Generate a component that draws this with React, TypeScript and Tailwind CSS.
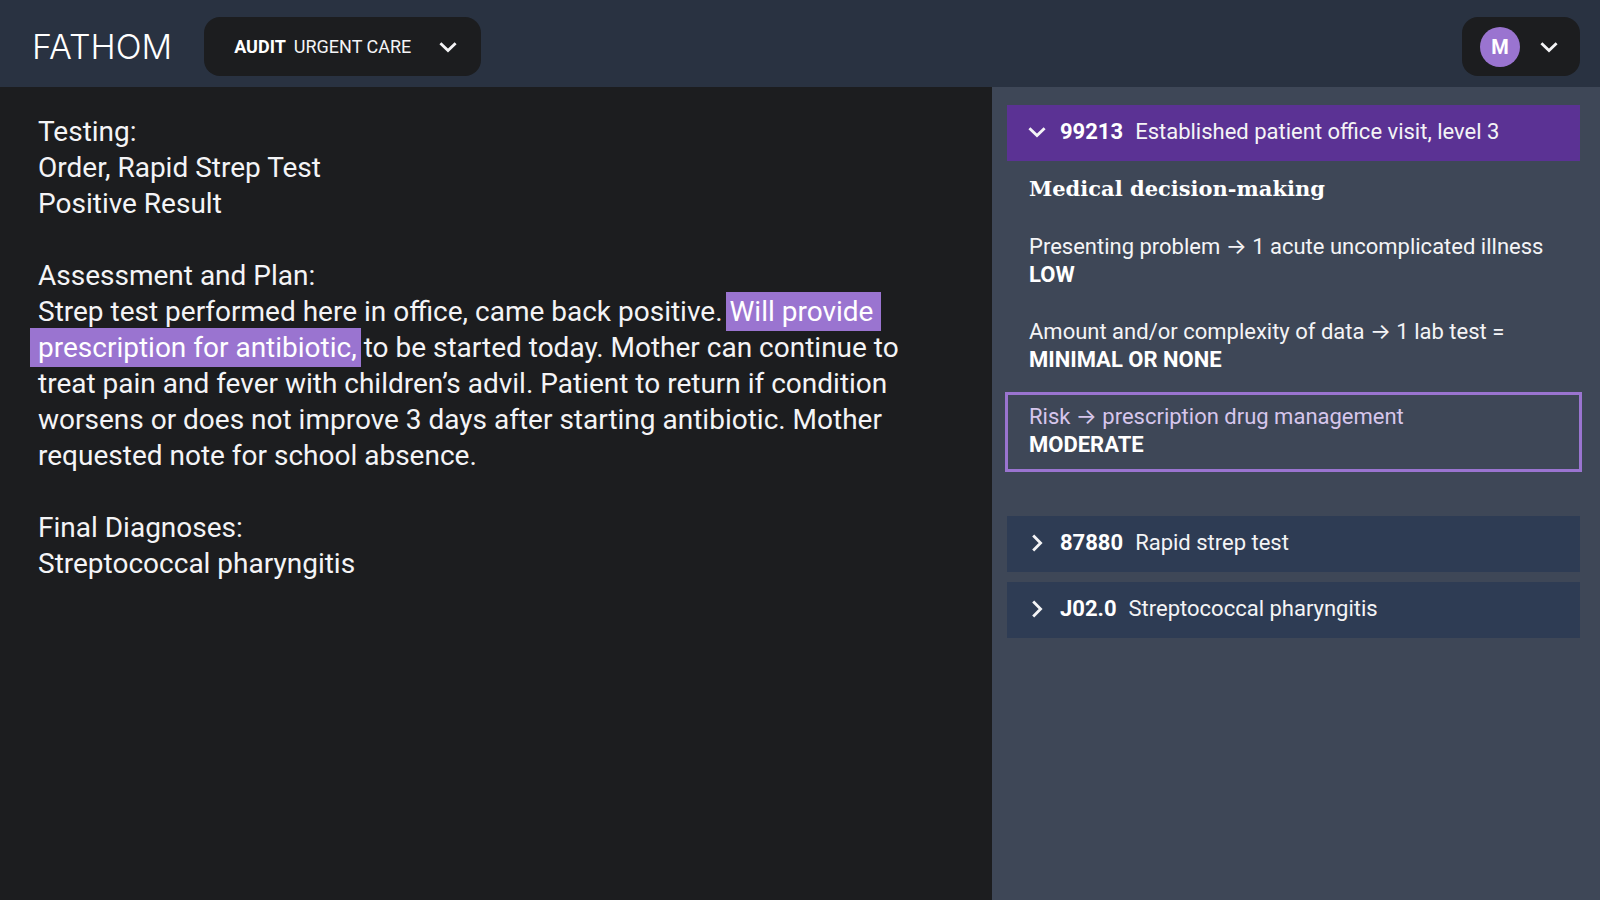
import { useState } from 'react';
import clsx from 'clsx';

type ChevronProps = { direction?: 'down' | 'right' };

function Chevron({ direction = 'down' }: ChevronProps) {
  return (
    <svg
      viewBox="0 0 18 18"
      className={clsx('size-[18px] shrink-0', direction === 'right' && '-rotate-90')}
      fill="none"
      stroke="currentColor"
      strokeWidth="2.8"
      aria-hidden="true"
    >
      <path d="M1.4 5.2 9 12.6l7.6-7.4" />
    </svg>
  );
}

const factors = [
  { label: 'Presenting problem → 1 acute uncomplicated illness', level: 'LOW', active: false },
  { label: 'Amount and/or complexity of data → 1 lab test =', level: 'MINIMAL OR NONE', active: false },
  { label: 'Risk → prescription drug management', level: 'MODERATE', active: true },
];

type CodeRowProps = { code: string; title: string; open?: boolean; onClick?: () => void };

function CodeRow({ code, title, open = false, onClick }: CodeRowProps) {
  return (
    <button
      type="button"
      aria-expanded={open}
      onClick={onClick}
      className={clsx(
        'flex h-14 w-full items-center px-[21px] pb-0.5 text-left text-[22px] leading-7',
        open ? 'bg-[#5b3294]' : 'bg-[#2e3c54]'
      )}
    >
      <Chevron direction={open ? 'down' : 'right'} />
      <span className="ml-3.5 font-bold text-white">{code}</span>
      <span className="ml-3">{title}</span>
    </button>
  );
}

export default function App() {
  const [open, setOpen] = useState(true);

  return (
    <div className="flex min-h-screen flex-col bg-[#1c1d1f] font-['Roboto','Inter',sans-serif] text-[#f4f4f6]">
      <header className="flex h-[87px] items-center justify-between bg-[#293241] pt-[6px] pr-5 pl-8">
        <div className="flex items-center gap-8">
          <a href="#" className="font-['Inter',sans-serif] text-[34px] leading-10 font-light text-white">
            FATHOM
          </a>
          <button type="button" className="flex h-[59px] items-center rounded-2xl bg-[#1c1d1f] pr-6 pl-[30px] text-lg">
            <span className="font-bold text-white">AUDIT</span>
            <span className="ml-2">URGENT CARE</span>
            <span className="ml-7">
              <Chevron />
            </span>
          </button>
        </div>
        <button type="button" aria-label="Account" className="flex h-[59px] items-center gap-5 rounded-2xl bg-[#1c1d1f] pr-[22px] pl-[18px]">
          <span className="grid size-10 place-items-center rounded-full bg-[#9a74d0] text-xl font-bold text-white">M</span>
          <Chevron />
        </button>
      </header>

      <div className="flex flex-1">
        <main className="w-[62%] px-[38px] pt-[27px] text-[28px] leading-9">
          <p>
            Testing:
            <br />
            Order, Rapid Strep Test
            <br />
            Positive Result
          </p>
          <p className="mt-9">
            Assessment and Plan:
            <br />
            Strep test performed here in office, came back positive.{' '}
            <mark className="-ml-1 bg-[#9a74d0] py-[3px] pr-2 pl-1 text-white">Will provide</mark>
            <br />
            <mark className="-mr-1 -ml-2 bg-[#9a74d0] py-[3px] pr-1 pl-2 text-white">prescription for antibiotic,</mark> to be started today. Mother can continue to
            <br />
            treat pain and fever with children’s advil. Patient to return if condition
            <br />
            worsens or does not improve 3 days after starting antibiotic. Mother
            <br />
            requested note for school absence.
          </p>
          <p className="mt-9">
            Final Diagnoses:
            <br />
            Streptococcal pharyngitis
          </p>
        </main>

        <aside className="flex-1 bg-[#3e4757] pt-[18px] pr-5 pl-[15px]">
          <CodeRow code="99213" title="Established patient office visit, level 3" open={open} onClick={() => setOpen(!open)} />
          {open && (
            <section className="mb-11 pt-3.5 text-[22px] leading-7">
              <h2 className="mb-[19px] px-[22px] font-['DejaVu_Serif',serif] text-[21px] font-bold text-white">Medical decision-making</h2>
              <div className="-mx-0.5 space-y-[5px]">
                {factors.map((f) => (
                  <div
                    key={f.label}
                    className={clsx('border-[3px] px-[21px] pt-2 pb-2.5', f.active ? 'border-[#9a74d0]' : 'border-transparent')}
                  >
                    <p className={clsx(f.active && 'text-[#d6c6ec]')}>{f.label}</p>
                    <p className="font-bold text-white">{f.level}</p>
                  </div>
                ))}
              </div>
            </section>
          )}
          <div className="space-y-2.5">
            <CodeRow code="87880" title="Rapid strep test" />
            <CodeRow code="J02.0" title="Streptococcal pharyngitis" />
          </div>
        </aside>
      </div>
    </div>
  );
}
